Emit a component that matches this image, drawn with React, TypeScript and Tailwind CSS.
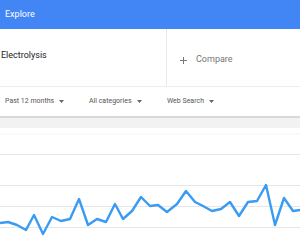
const points: [number, number][] = [
  [0, 223], [8, 222], [17, 225], [26, 230], [34, 215], [43, 234], [52, 217], [61, 221],
  [70, 219], [79, 199], [88, 225], [97, 219], [106, 222], [115, 204], [123, 219], [132, 211],
  [141, 197], [150, 206], [158, 205], [167, 212], [177, 204], [186, 191], [195, 202], [203, 206],
  [212, 211], [221, 209], [230, 202], [239, 216], [248, 202], [257, 201], [266, 185], [275, 225],
  [284, 198], [293, 211], [300, 210],
];

const gridLines = [26, 57, 78, 99];

const filters = [
  { label: "Past 12 months", width: "w-[84px]" },
  { label: "All categories", width: "w-[78px]" },
  { label: "Web Search", width: "w-auto" },
];

const Caret = () => (
  <svg width="5" height="3" viewBox="0 0 5 3" className="ml-[5px]">
    <path d="M0 0h5L2.5 3z" fill="#666" />
  </svg>
);

const Chart = () => {
  const d = points.map(([x, y], i) => `${i ? "L" : "M"}${x} ${y - 128}`).join(" ");
  return (
    <svg width="300" height="112" viewBox="0 0 300 112" className="block">
      <line x1="0" y1="6" x2="300" y2="6" stroke="#f4f4f4" />
      {gridLines.map((y) => (
        <line key={y} x1="0" y1={y + 0.5} x2="300" y2={y + 0.5} stroke="#e6e6e6" />
      ))}
      <path d={d} fill="none" stroke="#3a9bf2" strokeWidth="2.4" strokeLinejoin="round" />
    </svg>
  );
};

const App = () => {
  return (
    <div className="w-[300px] h-[240px] overflow-hidden bg-white font-['Roboto',sans-serif]">
      <div className="h-[29px] bg-[#4285f4] flex items-center px-[5px] text-white text-[9px]">
        Explore
      </div>

      <div className="h-[58px] flex border-b border-[#ececec]">
        <div className="w-[167px] border-r border-[#e8e8e8] flex items-center pb-[4px] pl-[1px] text-[9px] text-[#222]">
          Electrolysis
        </div>
        <div className="flex items-center pt-[5px] pl-[13px] text-[9px] text-[#757575]">
          <svg width="7" height="7" viewBox="0 0 7 7">
            <path d="M3.5 0v7M0 3.5h7" stroke="#777" strokeWidth="1" />
          </svg>
          <span className="ml-[9px]">Compare</span>
        </div>
      </div>

      <div className="h-[29px] flex items-center pl-[5px] text-[7px] text-[#555]">
        {filters.map((f) => (
          <div key={f.label} className={`flex items-center ${f.width}`}>
            {f.label}
            <Caret />
          </div>
        ))}
      </div>

      <div className="h-[2px] bg-[#d8d8d8]" />
      <div className="h-[10px] bg-[#f2f2f2]" />

      <Chart />
    </div>
  );
};

export default App;
